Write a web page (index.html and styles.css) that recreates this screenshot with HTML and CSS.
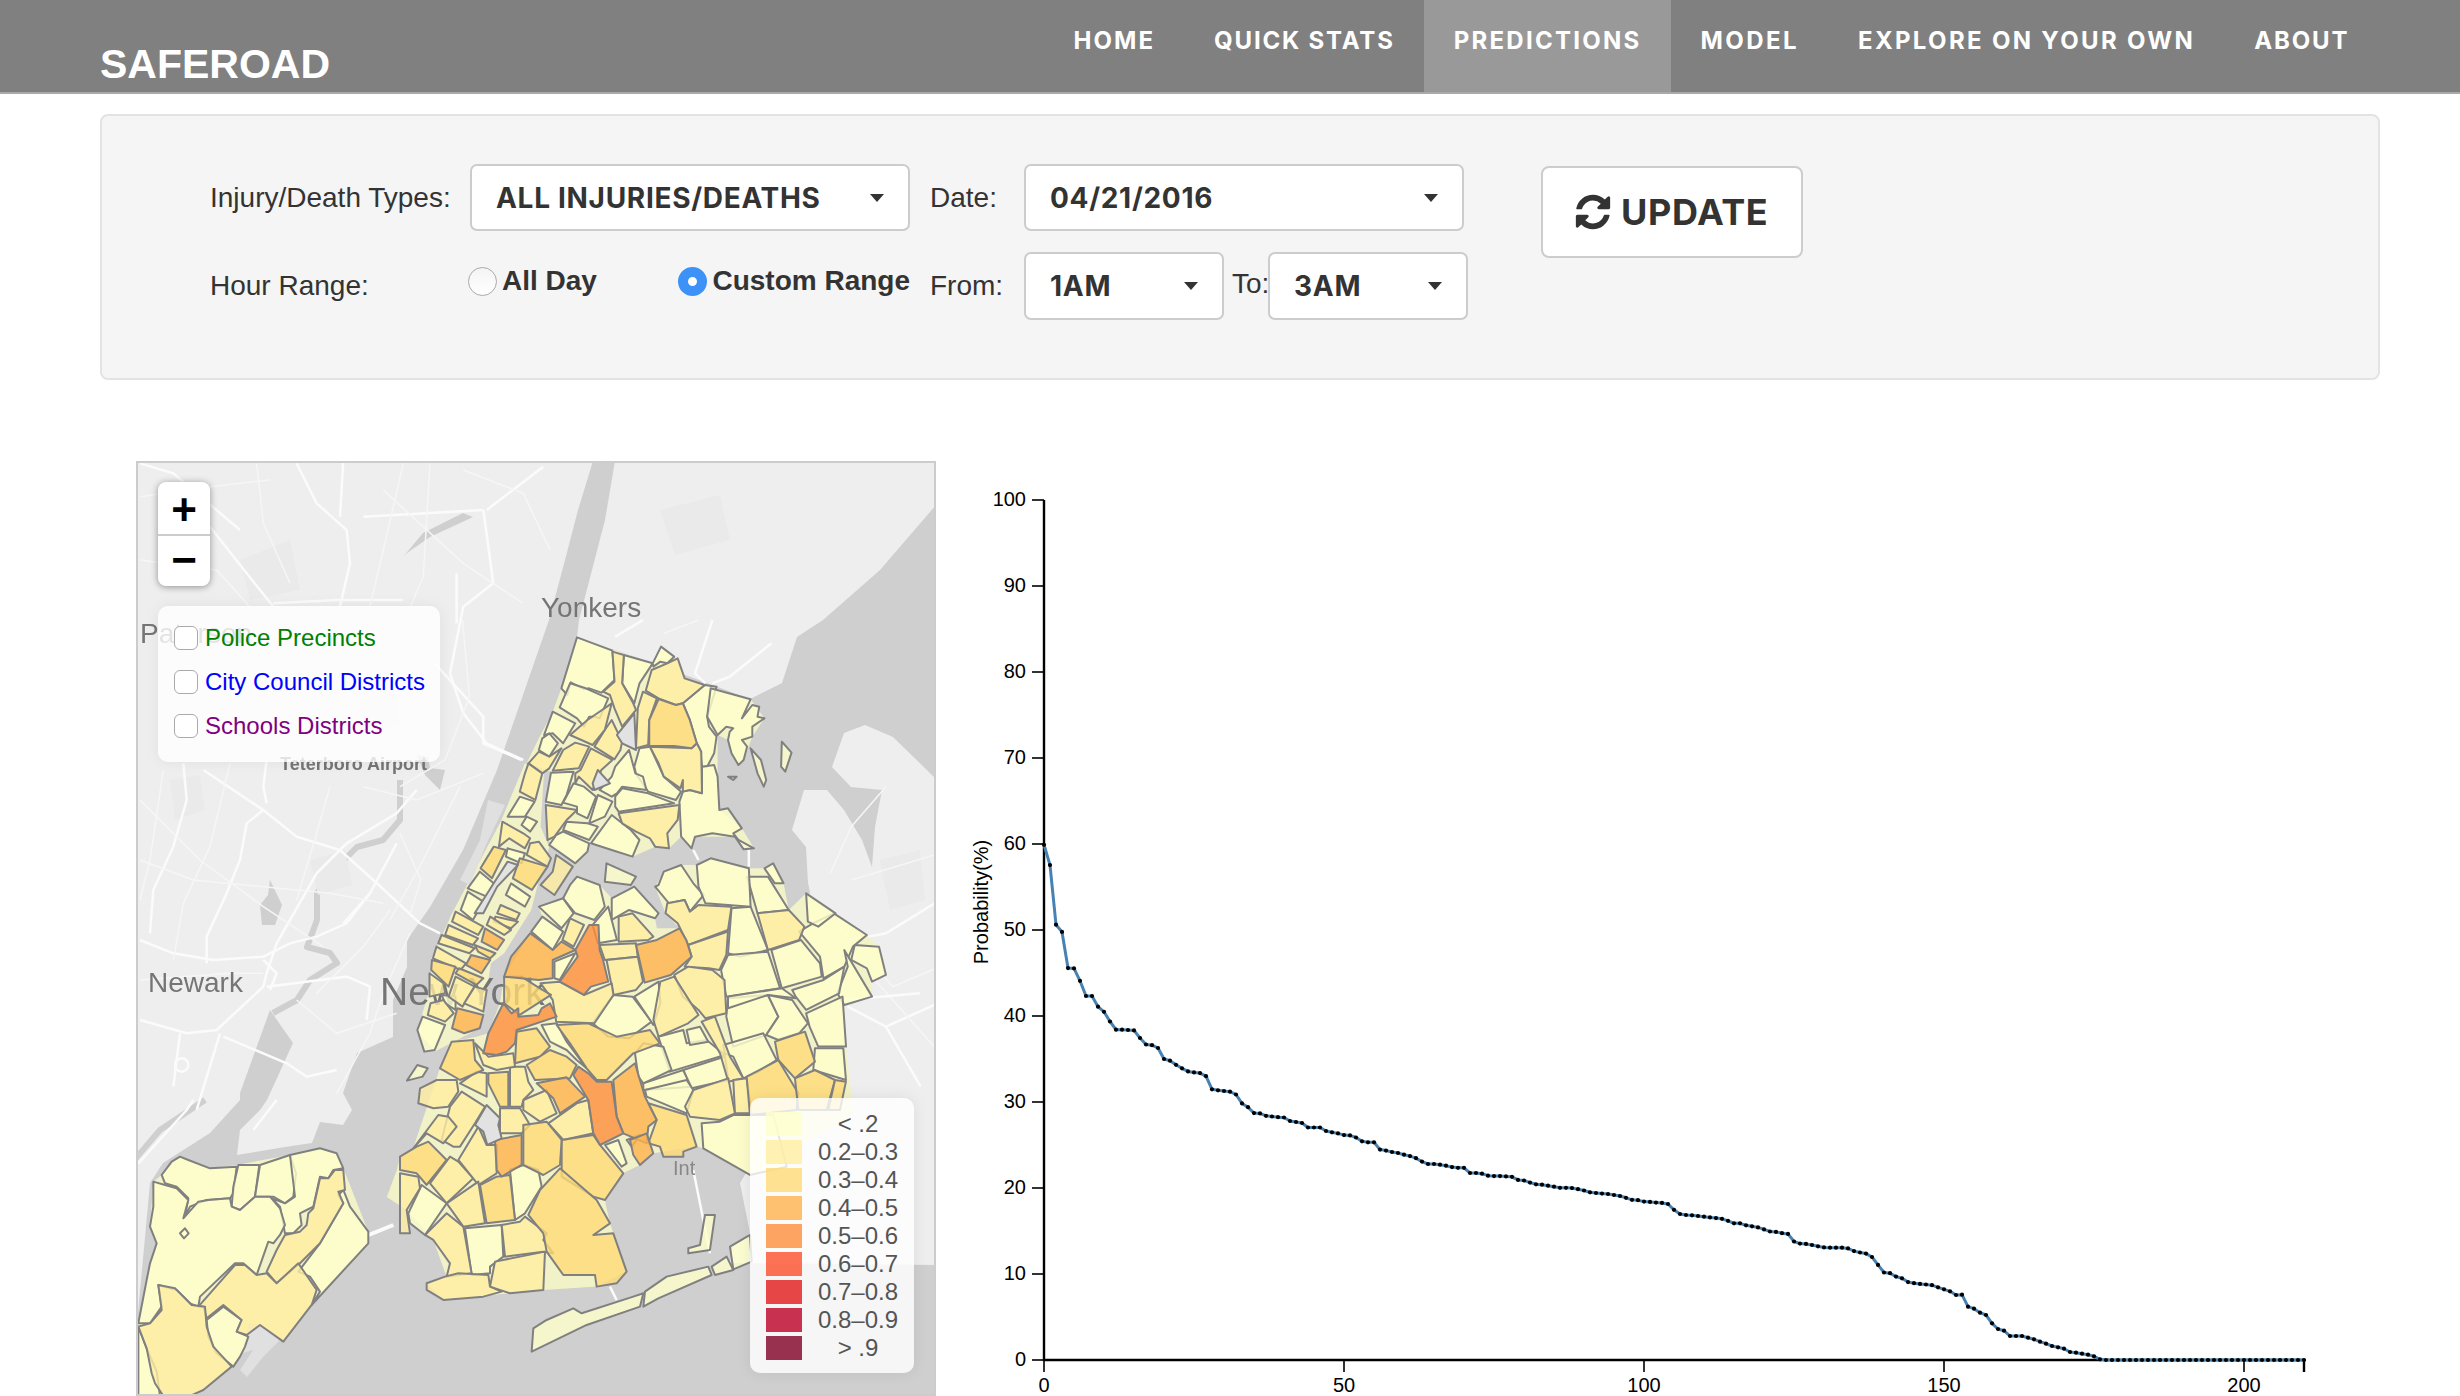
FILE: index.html
```html
<!DOCTYPE html>
<html lang="en">
<head>
<meta charset="utf-8">
<title>SafeRoad</title>
<link rel="stylesheet" href="styles.css">
</head>
<body>
<header class="topbar">
  <div class="brand">SAFEROAD</div>
  <nav class="nav">
    <a class="nav-item">HOME</a>
    <a class="nav-item quick">QUICK STATS</a>
    <a class="nav-item active pred">PREDICTIONS</a>
    <a class="nav-item model">MODEL</a>
    <a class="nav-item explore">EXPLORE ON YOUR OWN</a>
    <a class="nav-item about">ABOUT</a>
  </nav>
</header>

<section class="filters">
  <div class="filter-rows">
    <div class="filter-row">
      <span class="lbl lbl-first">Injury/Death Types:</span>
      <div class="select sel-wide"><span>ALL INJURIES/DEATHS</span><i class="caret"></i></div>
      <span class="lbl lbl-mid">Date:</span>
      <div class="select sel-wide"><span>04/21/2016</span><i class="caret"></i></div>
    </div>
    <div class="filter-row">
      <span class="lbl lbl-first">Hour Range:</span>
      <div class="radios">
        <label class="radio-item item-a"><i class="radio"></i><span>All Day</span></label>
        <label class="radio-item"><i class="radio on"></i><span>Custom Range</span></label>
      </div>
      <span class="lbl lbl-mid">From:</span>
      <div class="select sel-hour"><span>1AM</span><i class="caret"></i></div>
      <span class="lbl lbl-to">To:</span>
      <div class="select sel-hour"><span>3AM</span><i class="caret"></i></div>
    </div>
  </div>
  <button class="update" type="button">
    <svg class="refresh" viewBox="0 0 1792 1792"><path d="M1639 1056q0 5-1 7-64 268-268 434.5t-478 166.5q-146 0-282.5-55t-243.5-157l-129 129q-19 19-45 19t-45-19-19-45v-448q0-26 19-45t45-19h448q26 0 45 19t19 45-19 45l-137 137q71 66 161 102t187 36q134 0 250-65t186-179q11-17 53-117 8-23 30-23h192q13 0 22.5 9.5t9.5 22.5zm25-800v448q0 26-19 45t-45 19h-448q-26 0-45-19t-19-45 19-45l138-138q-148-137-349-137-134 0-250 65t-186 179q-11 17-53 117-8 23-30 23h-199q-13 0-22.5-9.5t-9.5-22.5v-7q65-268 270-434.5t480-166.5q146 0 284 55.5t245 156.5l130-129q19-19 45-19t45 19 19 45z"/></svg>
    <span>UPDATE</span>
  </button>
</section>

<main class="content">
  <div class="map">
    <svg class="map-svg" viewBox="138 463 796 931" width="796" height="931">
      <g class="basemap">
        <rect class="land" x="138" y="463" width="796" height="931"/>
        <polygon class="water" points="593,461 578,510 565,560 549,620 497,770 463,850 430,907 407,940 407,967 393,1000 393,1037 357,1053 343,1093 352,1110 343,1125 320,1122 312,1143 285,1147 237,1155 240,1130 260,1110 267,1100 293,1043 270,1010 240,1093 240,1100 210,1133 163,1163 150,1183 138,1313 138,1396 936,1396 936,505 880,570 823,620 797,637 782,683 750,699 653,663 577,637 579,620 605,520 615,461"/>
        <polygon class="land" points="936,778 934,777 893,737 865,725 844,733 832,767 851,787 882,790 875,827 872,867 862,840 844,810 827,790 804,790 792,830 806,847 808,883 810,892 800,950 790,1010 790,1100 740,1183 750,1233 733,1247 730,1263 936,1265"/>
        <g class="river">
          <polyline points="400,780 400,820 383,840 357,847 337,867 317,893 317,920 307,947 330,953 337,963 310,980 297,1000 273,1013"/>
          <polyline points="205,1100 160,1130 130,1165"/>
        </g>
        <polygon class="water" points="403,557 423,533 463,513 473,517 430,537 407,553"/>
        <polygon class="water" points="417,755 428,757 430,768 445,770 440,790 425,775"/>
        <polygon class="water" points="270,880 268,895 260,905 262,925 275,925 282,905"/>
        <polygon class="blob" points="170,780 200,775 205,810 175,820"/>
        <polygon class="blob" points="310,860 345,850 352,885 318,895"/>
        <polygon class="blob" points="360,700 395,690 400,725 365,735"/>
        <polygon class="blob" points="660,510 720,495 730,540 675,555"/>
        <polygon class="blob" points="240,560 290,540 300,590 250,600"/>
        <polygon class="blob" points="880,860 920,850 925,900 890,910"/>
        <g transform="translate(400 620) scale(.3471 .3333)">
          <polygon class="backing" points="510,52 728,130 752,80 800,115 820,175 878,195 1010,238 1050,295 1015,350 990,420 975,435 945,360 915,345 915,470 920,570 985,625 1020,685 965,650 850,650 840,685 810,650 775,685 735,680 670,710 550,670 505,730 425,660 420,555 435,455 365,430 400,355 440,275 465,205"/>
          <polygon class="backing" points="360,430 415,455 405,620 430,680 398,790 378,870 300,1000 262,1030 240,1180 230,1225 100,1295 50,1230 88,1100 90,1020 150,880 290,605"/>
          <polygon class="backing" points="470,835 510,770 575,795 610,835 675,800 745,880 735,895 740,925 805,925 765,880 735,800 760,755 810,735 855,735 895,715 1005,745 1050,745 1075,730 1105,790 1120,870 1170,820 1345,945 1380,980 1400,1065 1360,1085 1360,1130 1280,1155 1285,1280 1295,1380 1310,1480 1008,1665 874,1585 855,1580 730,1600 691,1635 643,1660 590,1740 605,1810 653,1955 567,2000 413,2010 125,2040 77,1990 134,1970 96,1860 19,1770 -38,1731 -9,1650 0,1610 38,1585 115,1345 144,1265 220,1250 254,1240 288,1150 300,1070 375,940 410,890 400,860"/>
        </g>
        <polygon class="backing" transform="translate(130 1100) scale(.3333)" points="95,225 150,170 240,205 320,195 480,165 570,145 620,160 640,205 715,395 715,430 545,615 460,725 390,675 350,705 345,740 310,800 220,870 180,888 25,888 25,670 50,540 80,430 60,380 70,245"/>
        <polygon class="park" points="488,800 505,805 486,845 470,885 460,880 480,840"/>
        <polygon class="park" points="633,713 636,750 622,743 617,735"/>
        <polygon class="park" points="597,770 610,783 594,790 592,783"/>
        <polygon class="park" points="487,1105 500,1118 498,1125 502,1138 488,1145 483,1132 475,1125"/>
        <polygon class="park" points="248,1324 260,1324 280,1340 263,1357 247,1377 240,1370 253,1350 243,1353"/>
        <g class="roads" transform="translate(130 760) scale(.3333)">
          <polyline points="30,540 130,580 250,600 400,590 480,550 560,530 650,490 720,400"/>
          <polyline points="160,10 170,120 130,260 70,390 60,520"/>
          <polyline points="220,30 400,150 500,230 630,270 730,360 870,490 930,520"/>
          <polyline points="400,150 350,190 330,300 290,400 230,530 230,610"/>
          <polyline points="860,90 800,160 650,250 560,340 440,550 410,640 400,680 260,810 170,820 30,780"/>
          <polyline points="410,0 400,80 410,130"/>
          <polyline points="410,680 650,650 720,680 710,780"/>
          <polyline points="280,830 470,910 530,950 620,930"/>
          <polyline points="270,820 200,1050"/>
          <polyline points="150,820 130,980"/>
          <polyline points="800,250 720,400 640,490"/>
          <polyline points="400,600 440,640 420,690"/>
          <circle cx="155" cy="915" r="20"/>
        </g>
        <g class="roads minor" transform="translate(130 760) scale(.3333)">
          <polyline points="30,120 210,300 400,440 580,560"/>
          <polyline points="100,30 60,300 30,420"/>
          <polyline points="300,10 240,260 160,430 130,600"/>
          <polyline points="600,80 560,220 500,420"/>
          <polyline points="30,300 190,360 400,380 600,400 760,430"/>
          <polyline points="30,660 300,640 400,640"/>
          <polyline points="500,720 620,820 800,760"/>
          <polyline points="560,700 700,560 780,450"/>
          <polyline points="620,1000 720,820 760,700 840,520"/>
          <polyline points="990,80 880,300 780,480"/>
          <polyline points="700,80 860,120 1060,40"/>
        </g>
        <g class="roads" transform="translate(130 450) scale(.3333)">
          <polyline points="500,40 560,160 650,240 660,340 630,470"/>
          <polyline points="640,30 630,200"/>
          <polyline points="240,230 350,370 430,470"/>
          <polyline points="30,40 130,70 330,240"/>
          <polyline points="700,200 1060,180"/>
          <polyline points="1060,180 1090,400 1000,470 960,670 1000,790 1070,880 1180,930"/>
          <polyline points="1240,50 1070,180"/>
          <polyline points="980,370 980,520"/>
          <polyline points="430,460 620,450 820,450"/>
        </g>
        <g class="roads minor" transform="translate(130 450) scale(.3333)">
          <polyline points="380,40 400,220 480,400"/>
          <polyline points="820,40 760,300 720,470"/>
          <polyline points="900,40 880,380 820,520"/>
          <polyline points="30,330 260,360 440,560"/>
          <polyline points="1000,60 1180,130 1260,300"/>
          <polyline points="760,120 1000,340 1180,460"/>
          <polyline points="30,140 240,110 420,90"/>
        </g>
        <g class="roads" transform="translate(400 620) scale(.3471 .3333)">
          <polyline points="100,130 240,290 240,370 350,420"/>
          <polyline points="620,50 700,0"/>
          <polyline points="900,0 850,160 880,190"/>
          <polyline points="1070,70 950,170 900,190"/>
          <polyline points="1556,840 1400,940 1350,950"/>
          <polyline points="1550,1150 1400,1220 1290,1160"/>
          <polyline points="1400,1220 1500,1400"/>
          <polyline points="845,690 860,720"/>
          <polyline points="1005,690 1005,740"/>
        </g>
        <g class="roads minor" transform="translate(400 620) scale(.3471 .3333)">
          <polyline points="0,500 130,420 200,230 180,0"/>
          <polyline points="760,40 860,0"/>
          <polyline points="1300,780 1556,700"/>
          <polyline points="1250,900 1420,1100 1556,1040"/>
          <polyline points="1400,500 1300,620 1240,760"/>
          <polyline points="1300,1000 1556,1300"/>
          <polyline points="0,640 60,780 30,880"/>
        </g>
        <g class="roads" transform="translate(130 1100) scale(.3333)">
          <polyline class="bridge" points="716,405 790,375"/>
          <polyline points="25,190 170,30 190,0"/>
          <polyline points="370,90 440,0"/>
        </g>
        <g class="roads" transform="translate(400 1000) scale(.3333)">
          <polyline points="880,510 930,760"/>
          <polyline points="630,860 650,900"/>
          <polyline points="1330,0 1560,-20"/>
        </g>
        <text class="place" x="541" y="617">Yonkers</text>
        <text class="place" x="140" y="643">Paterson</text>
        <text class="place" x="148" y="992">Newark</text>
        <text class="place big" x="380" y="1005">New York</text>
        <text class="place small" x="280" y="770">Teterboro Airport</text>
        <text class="place int" x="673" y="1175">Int</text>
      </g>

      <g class="districts" transform="translate(400 620) scale(.3471 .3333)">
        <g class="c0">
          <polygon points="510,52 612,92 618,180 580,218 545,205 530,208 492,187 482,225 465,205"/>
          <polygon points="645,105 728,130 690,190 675,250 640,190"/>
          <polygon points="752,80 790,110 770,130 750,125 730,140 728,130"/>
          <polygon points="815,250 878,195 912,200 885,290 890,320 912,350 905,400 885,440 870,440 865,390 855,370 835,300"/>
          <polygon points="895,205 1010,238 985,295 1015,255 1035,260 1030,290 1050,295 1015,320 1015,350 985,360 1000,380 990,420 975,435 955,400 945,360 950,335 960,325 940,320 915,345 885,290"/>
          <polygon points="1100,365 1128,398 1110,455 1098,440"/>
          <polygon points="1010,385 1040,420 1055,480 1048,500 1030,460"/>
          <polygon points="945,470 970,470 960,480"/>
          <polygon points="690,385 720,380 760,470 810,515 795,540 715,515 680,462 675,440"/>
          <polygon points="870,440 905,435 915,470 920,570 945,565 985,625 960,640 975,660 1020,685 990,688 965,650 900,640 850,650 840,685 810,650 805,545 815,515 835,510 870,520"/>
          <polygon points="640,505 715,520 790,550 630,575 620,560 620,530"/>
          <polygon points="660,390 678,460 700,470 710,510 640,500 625,520 610,530 575,510 610,470 620,440"/>
          <polygon points="490,190 535,205 600,235 575,295 560,290 545,290 530,320 510,295 460,262"/>
          <polygon points="440,275 505,310 470,370 440,340 415,345"/>
          <polygon points="430,340 455,370 430,410 400,390 410,355"/>
          <polygon points="435,458 500,455 480,525 465,555 420,545"/>
          <polygon points="500,490 530,500 565,530 540,595 510,580 510,560 470,548"/>
          <polygon points="570,525 612,545 590,590 545,610"/>
          <polygon points="480,605 540,610 570,620 545,660 470,630"/>
          <polygon points="610,585 665,630 690,660 670,710 610,690 550,670"/>
          <polygon points="470,635 545,670 540,695 505,730 430,675 450,645"/>
          <polygon points="345,530 388,545 360,590 310,590"/>
          <polygon points="365,590 395,605 375,635 350,615"/>
          <polygon points="310,685 360,700 350,730 305,710"/>
          <polygon points="230,755 270,790 250,830 195,805"/>
          <polygon points="195,815 240,845 210,900 175,870"/>
          <polygon points="320,790 375,830 360,860 305,825"/>
          <polygon points="120,1125 160,1130 160,1170 130,1150"/>
          <polygon points="65,1190 130,1215 100,1290 70,1295 50,1230"/>
          <polygon points="50,1335 80,1345 65,1370 20,1382"/>
          <polygon points="595,730 680,770 665,795 590,785"/>
          <polygon points="510,770 575,795 590,860 560,900 505,880 470,835 490,795"/>
          <polygon points="400,860 470,835 500,880 465,925"/>
          <polygon points="378,935 410,890 470,935 440,990"/>
          <polygon points="600,860 625,960 570,970 555,915"/>
          <polygon points="610,835 675,800 745,880 735,895 660,870 610,900"/>
          <polygon points="745,795 760,755 810,735 845,790 875,825 835,875 820,840 775,850 735,800"/>
          <polygon points="445,1025 505,1000 460,1080 445,1075"/>
          <polygon points="555,1210 615,1125 670,1130 725,1205 660,1255 600,1250"/>
          <polygon points="675,1130 745,1085 750,1150 730,1215"/>
          <polygon points="955,865 1010,860 1060,990 980,1010 945,1000"/>
          <polygon points="1000,770 1060,770 1120,870 1030,880"/>
          <polygon points="855,735 895,715 1005,745 1010,860 880,850 860,800"/>
          <polygon points="1050,745 1075,730 1105,790 1080,790"/>
          <polygon points="945,1005 1060,995 1095,1105 940,1130 925,1050"/>
          <polygon points="1070,990 1155,960 1210,1030 1215,1070 1100,1105"/>
          <polygon points="1150,935 1190,910 1250,880 1345,945 1305,980 1280,1040 1220,1075 1210,1010"/>
          <polygon points="1170,820 1255,880 1205,920 1175,905"/>
          <polygon points="1310,975 1380,980 1400,1065 1360,1085 1345,1045 1300,1020"/>
          <polygon points="1280,990 1360,1130 1280,1155 1260,1120 1290,1040"/>
          <polygon points="1130,1110 1220,1080 1280,1040 1265,1120 1170,1170 1140,1130"/>
          <polygon points="945,1135 1060,1125 1090,1190 1055,1245 960,1280 940,1190"/>
          <polygon points="945,1130 1100,1105 1140,1135 1060,1125 945,1165"/>
          <polygon points="1060,1125 1130,1140 1175,1210 1150,1240 1090,1260 1055,1245 1090,1190"/>
          <polygon points="1170,1180 1275,1130 1285,1280 1205,1280 1180,1220"/>
        </g>
        <g class="c1">
          <polygon points="612,95 645,105 640,190 672,250 680,270 640,320 618,265 605,225 585,215 618,185"/>
          <polygon points="800,115 820,175 878,195 815,250 795,255 745,235 708,212 725,150 770,130"/>
          <polygon points="700,215 740,235 718,300 715,375 680,385 685,265"/>
          <polygon points="720,380 840,385 855,370 868,395 870,520 835,510 815,515 815,480 808,505 760,470 745,430"/>
          <polygon points="805,555 630,580 640,610 680,635 720,655 735,680 775,685 770,640 800,600"/>
          <polygon points="550,385 612,420 580,450 555,510 535,490 515,470 505,490 505,460 520,450"/>
          <polygon points="610,300 640,365 635,390 618,418 560,380 590,330"/>
          <polygon points="610,250 590,330 555,375 490,345 540,300"/>
          <polygon points="505,368 545,380 515,445 440,452 470,390"/>
          <polygon points="400,395 430,410 465,385 430,445 410,460 370,430"/>
          <polygon points="370,430 410,460 390,540 345,515 360,460"/>
          <polygon points="420,555 510,570 480,600 445,650 425,660"/>
          <polygon points="295,605 355,640 375,655 360,685 315,655 285,680"/>
          <polygon points="375,670 400,665 435,715 425,740 365,705"/>
          <polygon points="450,705 498,740 445,825 405,795 440,755"/>
          <polygon points="290,855 345,880 335,900 280,880"/>
          <polygon points="275,890 340,905 320,925 270,905"/>
          <polygon points="260,890 320,930 300,945 250,915"/>
          <polygon points="160,875 240,920 225,945 150,905"/>
          <polygon points="140,915 225,955 210,975 130,945"/>
          <polygon points="120,945 215,985 200,1000 110,970"/>
          <polygon points="105,980 190,1030 175,1050 95,1015"/>
          <polygon points="160,1070 215,1100 180,1160 140,1130"/>
          <polygon points="215,1100 250,1110 240,1175 185,1150"/>
          <polygon points="88,1150 125,1140 155,1180 130,1205 80,1185"/>
          <polygon points="85,1060 125,1090 130,1120 85,1130"/>
          <polygon points="490,895 530,915 500,980 468,960"/>
          <polygon points="630,890 670,880 730,950 715,960 630,965"/>
          <polygon points="770,850 820,840 835,875 860,855 955,860 945,930 830,975 800,910 765,880"/>
          <polygon points="830,975 945,935 940,1005 920,1050 890,1045 820,1040 840,1010"/>
          <polygon points="575,975 680,970 685,1010 590,1020"/>
          <polygon points="595,1020 685,1010 700,1085 680,1110 615,1125"/>
          <polygon points="405,1090 460,1085 530,1125 610,1090 615,1125 560,1210 450,1205 440,1140"/>
          <polygon points="790,1065 830,1040 900,1050 935,1080 940,1180 880,1195 860,1170 815,1130"/>
          <polygon points="750,1085 790,1070 860,1185 830,1210 745,1250 730,1200"/>
          <polygon points="1030,880 1120,870 1165,920 1150,960 1060,990"/>
        </g>
        <g class="c2">
          <polygon points="745,237 795,255 815,250 835,300 855,370 840,385 790,378 718,378 718,300"/>
          <polygon points="345,715 425,740 380,810 325,775"/>
          <polygon points="270,680 305,690 265,775 232,745"/>
          <polygon points="215,975 275,1000 260,1015 225,995"/>
          <polygon points="92,1020 160,1040 140,1100 90,1050"/>
          <polygon points="170,1045 240,1075 220,1095 160,1060"/>
          <polygon points="300,1070 350,1070 395,1100 435,1125 345,1185 300,1150"/>
        </g>
        <g class="c3">
          <polygon points="245,925 300,960 280,990 235,965"/>
          <polygon points="205,1005 260,1020 235,1060 190,1035"/>
          <polygon points="165,1165 240,1185 230,1225 185,1240 150,1225"/>
          <polygon points="680,975 740,960 805,925 825,960 840,1010 780,1065 705,1088"/>
          <polygon points="375,940 440,990 465,965 505,990 440,1020 440,1075 400,1080 300,1070 320,1010"/>
        </g>
        <g class="c4">
          <polygon points="545,915 572,915 575,990 585,1020 600,1085 550,1100 530,1125 460,1085 512,1010 505,990"/>
        </g>
      </g>

      <g class="districts" transform="translate(400 1000) scale(.3333)">
        <g class="c0">
          <polygon points="775,110 850,90 860,130 920,120 975,165 810,215"/>
          <polygon points="860,90 900,80 925,125 870,135"/>
          <polygon points="705,160 730,130 790,140 815,210 730,250 715,230"/>
          <polygon points="730,250 850,210 875,260 730,270"/>
          <polygon points="850,210 975,170 985,240 875,265"/>
          <polygon points="735,270 860,240 880,270 860,340 740,290"/>
          <polygon points="970,135 1090,100 1130,180 1075,215 1030,235 1000,170 975,160"/>
          <polygon points="1245,145 1330,145 1338,240 1240,210"/>
          <polygon points="905,370 960,365 1000,345 1050,345 1120,345 1160,500 1050,525 910,445"/>
          <polygon points="615,435 655,420 680,490 665,500"/>
          <polygon points="680,420 720,405 695,440"/>
          <polygon points="330,510 370,495 415,510 425,560 375,640 345,660"/>
          <polygon points="425,75 470,70 500,125 560,205 530,180 500,150 450,125"/>
          <polygon points="65,555 140,610 75,705 30,670 25,640"/>
          <polygon points="195,685 305,675 310,770 270,800 270,820 215,825"/>
          <polygon points="400,985 440,960 520,925 545,940 700,890 730,880 720,920 560,975 395,1055"/>
          <polygon points="735,875 800,830 925,800 935,825 775,895 730,920"/>
          <polygon points="935,800 980,770 1000,810 945,825"/>
          <polygon points="990,740 1050,705 1055,785 1000,808"/>
          <polygon points="915,645 945,645 930,750 865,760 865,745 900,735"/>
        </g>
        <g class="c1">
          <polygon points="905,65 945,50 990,170 1030,235 985,245 960,160"/>
          <polygon points="880,270 985,235 1005,340 960,360 870,350 855,320"/>
          <polygon points="1000,240 1040,235 1055,340 1005,340"/>
          <polygon points="445,370 530,310 565,300 580,400 490,420"/>
          <polygon points="300,325 360,325 390,375 365,400 300,400"/>
          <polygon points="370,300 440,270 470,340 420,365 370,330"/>
          <polygon points="330,200 375,200 385,245 400,270 370,300 365,320 330,320"/>
          <polygon points="180,250 230,215 260,220 260,290"/>
          <polygon points="60,265 110,240 170,240 175,275 145,320 100,325 55,310"/>
          <polygon points="150,320 185,275 255,320 225,370 180,440 160,440 125,420"/>
          <polygon points="115,345 145,350 170,380 130,430 80,400 40,445"/>
          <polygon points="90,550 150,470 175,485 220,535 140,610"/>
          <polygon points="175,480 235,380 260,435 290,435 290,520 235,555"/>
          <polygon points="0,520 55,530 60,565 20,630 30,700 0,700"/>
          <polygon points="140,640 190,680 215,820 140,830 150,790 100,720 75,705"/>
          <polygon points="140,610 235,545 255,670 190,680"/>
          <polygon points="305,675 360,665 375,650 440,700 430,720 460,760 430,755 315,770"/>
          <polygon points="285,785 435,755 430,870 330,880 270,860"/>
          <polygon points="80,850 135,830 175,820 265,825 270,860 305,875 250,890 130,900 80,870"/>
          <polygon points="225,130 265,170 340,160 345,200 290,210 250,195"/>
        </g>
        <g class="c2">
          <polygon points="1125,125 1215,95 1245,185 1185,235 1135,180"/>
          <polygon points="1040,230 1135,180 1195,280 1190,330 1050,345"/>
          <polygon points="1185,235 1245,210 1305,240 1280,330 1195,330"/>
          <polygon points="1305,240 1338,245 1320,330 1285,330"/>
          <polygon points="745,310 860,345 890,440 850,455 850,470 790,470 780,440 745,430 770,360"/>
          <polygon points="485,420 580,405 600,435 670,520 615,600 580,590 485,530"/>
          <polygon points="370,375 440,365 485,420 480,495 430,525 370,495"/>
          <polygon points="240,555 290,530 330,525 345,660 260,670"/>
          <polygon points="265,220 325,215 325,320 300,320 265,250"/>
          <polygon points="120,205 155,125 220,120 225,180 250,210 180,240"/>
          <polygon points="350,95 410,85 450,140 420,170 345,190"/>
          <polygon points="450,150 500,170 530,195 510,235 405,240 380,195"/>
          <polygon points="470,75 565,70 650,110 750,90 780,130 700,160 620,240 590,240 560,205 510,130"/>
          <polygon points="0,470 50,440 85,425 140,480 80,555 50,520 0,510"/>
          <polygon points="385,645 420,570 480,505 590,600 630,670 580,705 640,700 680,815 650,850 590,860 585,825 490,825 440,755 430,700"/>
        </g>
        <g class="c3">
          <polygon points="640,240 705,190 735,290 770,360 745,380 740,430 670,400 650,350"/>
          <polygon points="690,420 740,400 760,460 720,495 700,465"/>
          <polygon points="410,250 500,232 555,290 480,340 460,295"/>
          <polygon points="285,420 365,405 365,495 305,530 290,510"/>
        </g>
        <g class="c4">
          <polygon points="520,225 535,200 565,220 590,245 635,245 650,350 670,400 600,435 580,400 565,300"/>
          <polygon points="310,10 335,40 355,25 355,50 415,45 425,25 450,10 470,50 350,90 345,130 320,155 290,165 250,160 265,100"/>
        </g>
        <polygon class="hole" points="260,315 300,355 295,375 305,415 262,435 250,395 225,375"/>
      </g>

      <g class="districts" transform="translate(130 1100) scale(.3333)">
        <g class="c0">
          <polygon points="95,225 125,185 150,170 175,180 240,205 320,200 310,280 300,295 230,300 180,320 165,350 175,295 140,260 105,250"/>
          <polygon points="325,195 388,195 375,290 330,330 305,320 310,260"/>
          <polygon points="390,195 480,165 498,220 490,290 465,310 430,290 375,290"/>
          <polygon points="480,165 570,145 620,160 640,205 610,210 595,235 570,230 550,320 530,330 510,340 515,375 490,400 465,400 450,320 425,295 465,310 495,290"/>
          <polygon points="640,270 660,320 715,395 715,430 545,615 570,575 540,530 505,515 570,430 640,310 625,285"/>
          <polygon points="70,245 105,255 140,265 175,300 160,355 205,305 235,300 300,295 305,320 330,330 375,290 420,290 450,325 465,375 450,405 430,430 415,425 380,525 340,490 315,490 210,590 205,620 180,610 140,570 85,555 95,620 60,670 25,670 50,540 60,490 80,430 60,380 70,320"/>
          <polygon points="280,620 335,660 320,695 355,710 345,740 330,770 310,800 260,760 235,710 230,660"/>
          <polygon points="25,680 50,745 80,815 90,888 25,888"/>
          <polygon points="150,400 165,385 176,400 162,415"/>
        </g>
        <g class="c1">
          <polygon points="570,235 595,235 615,210 640,210 645,270 625,275 640,310 570,430 510,490 440,550 410,515 440,450 465,405 510,395 530,375 535,340 550,325"/>
          <polygon points="315,495 345,495 380,525 410,520 440,550 505,490 560,570 545,615 460,725 390,675 350,705 320,695 335,660 280,615 230,655 220,620 205,620"/>
          <polygon points="85,555 135,565 185,615 225,620 230,680 250,740 305,800 220,870 180,888 100,888 75,850 65,820 50,745 25,680 60,670 95,630"/>
        </g>
      </g>

      <g class="districts" transform="translate(400 620) scale(.3471 .3333)">
        <polygon class="hole" points="675,280 680,390 640,370 625,345"/>
        <polygon class="hole" points="570,450 605,490 560,510 555,490"/>
        <polygon class="hole" points="310,725 340,735 280,800 240,880 215,880 270,790"/>
      </g>
    </svg>

    <div class="zoom">
      <div class="zoom-btn">+</div>
      <div class="zoom-btn">−</div>
    </div>

    <div class="layers">
      <label class="layer green"><i class="check"></i>Police Precincts</label>
      <label class="layer blue"><i class="check"></i>City Council Districts</label>
      <label class="layer purple"><i class="check"></i>Schools Districts</label>
    </div>

    <div class="legend">
      <div class="legend-row"><i class="swatch s0"></i><span>&lt; .2</span></div>
      <div class="legend-row"><i class="swatch s1"></i><span>0.2–0.3</span></div>
      <div class="legend-row"><i class="swatch s2"></i><span>0.3–0.4</span></div>
      <div class="legend-row"><i class="swatch s3"></i><span>0.4–0.5</span></div>
      <div class="legend-row"><i class="swatch s4"></i><span>0.5–0.6</span></div>
      <div class="legend-row"><i class="swatch s5"></i><span>0.6–0.7</span></div>
      <div class="legend-row"><i class="swatch s6"></i><span>0.7–0.8</span></div>
      <div class="legend-row"><i class="swatch s7"></i><span>0.8–0.9</span></div>
      <div class="legend-row"><i class="swatch s8"></i><span>&gt; .9</span></div>
    </div>
  </div>

  <svg class="chart" viewBox="960 461 1400 935" width="1400" height="935">
    <defs>
      <marker id="dot" markerUnits="userSpaceOnUse" markerWidth="6" markerHeight="6" refX="3" refY="3">
        <circle cx="3" cy="3" r="2.1" fill="#000"/>
      </marker>
    </defs>
    <g class="ticks">
      <line x1="1032" x2="1044" y1="500" y2="500"/><line x1="1032" x2="1044" y1="586" y2="586"/>
      <line x1="1032" x2="1044" y1="672" y2="672"/><line x1="1032" x2="1044" y1="758" y2="758"/>
      <line x1="1032" x2="1044" y1="844" y2="844"/><line x1="1032" x2="1044" y1="930" y2="930"/>
      <line x1="1032" x2="1044" y1="1016" y2="1016"/><line x1="1032" x2="1044" y1="1102" y2="1102"/>
      <line x1="1032" x2="1044" y1="1188" y2="1188"/><line x1="1032" x2="1044" y1="1274" y2="1274"/>
      <line x1="1032" x2="1044" y1="1360" y2="1360"/>
      <line x1="1044" x2="1044" y1="1360" y2="1372"/><line x1="1344" x2="1344" y1="1360" y2="1372"/>
      <line x1="1644" x2="1644" y1="1360" y2="1372"/><line x1="1944" x2="1944" y1="1360" y2="1372"/>
      <line x1="2244" x2="2244" y1="1360" y2="1372"/>
    </g>
    <path class="axis" d="M1044 500V1360H2304V1372"/>
    <g class="ylabels">
      <text x="1026" y="506">100</text><text x="1026" y="592">90</text><text x="1026" y="678">80</text>
      <text x="1026" y="764">70</text><text x="1026" y="850">60</text><text x="1026" y="936">50</text>
      <text x="1026" y="1022">40</text><text x="1026" y="1108">30</text><text x="1026" y="1194">20</text>
      <text x="1026" y="1280">10</text><text x="1026" y="1366">0</text>
    </g>
    <g class="xlabels">
      <text x="1044" y="1392">0</text><text x="1344" y="1392">50</text><text x="1644" y="1392">100</text>
      <text x="1944" y="1392">150</text><text x="2244" y="1392">200</text>
    </g>
    <text class="ytitle" transform="translate(988 902) rotate(-90)">Probability(%)</text>
    <polyline class="curve" points="1044,844.8 1050,865.1 1056,924.7 1062,931.9 1068,968.1 1074,968.4 1080,980.8 1086,996 1092,996 1098,1006.7 1104,1011.8 1110,1021.5 1116,1029.7 1122,1029.7 1128,1030 1134,1030.4 1140,1038 1146,1044.5 1152,1045.2 1158,1048 1164,1059 1170,1060.7 1176,1064.8 1182,1068.3 1188,1071.4 1194,1072.4 1200,1073.1 1206,1076.2 1212,1089.3 1218,1090.3 1224,1091 1230,1091.7 1236,1094.5 1242,1103.4 1248,1107.2 1254,1113.1 1260,1113.4 1266,1115.8 1272,1116.5 1278,1117.2 1284,1117.5 1290,1121 1296,1122 1302,1123 1308,1127.5 1314,1127.5 1320,1127.5 1326,1131 1332,1132.3 1338,1133.4 1344,1135.1 1350,1135.4 1356,1137.5 1362,1141.3 1368,1142.3 1374,1142.3 1380,1149.6 1386,1150.6 1392,1152 1398,1153 1404,1154.7 1410,1156.1 1416,1158.2 1422,1161.6 1428,1164 1434,1164 1440,1164.7 1446,1165.7 1452,1167.1 1458,1167.8 1464,1167.8 1470,1173 1476,1173 1482,1173.7 1488,1175.7 1494,1176.1 1500,1176.1 1506,1176.4 1512,1176.8 1518,1179.9 1524,1180.5 1530,1182.6 1536,1184.3 1542,1184.7 1548,1185.7 1554,1186.7 1560,1187.8 1566,1187.8 1572,1188.1 1578,1189.2 1584,1190.5 1590,1192.3 1596,1193 1602,1193.6 1608,1194 1614,1195 1620,1196 1626,1197.8 1632,1199.8 1638,1200.2 1644,1201.6 1650,1201.9 1656,1202.6 1662,1202.9 1668,1204 1674,1209.8 1680,1214 1686,1215 1692,1215.3 1698,1216 1704,1216.7 1710,1217.4 1716,1218.1 1722,1218.8 1728,1220.8 1734,1223.3 1740,1223.3 1746,1225.3 1752,1226.3 1758,1227.4 1764,1229.4 1770,1231.5 1776,1231.9 1782,1233.2 1788,1233.9 1794,1241.5 1800,1243.6 1806,1243.9 1812,1245 1818,1246.3 1824,1247.4 1830,1247.7 1836,1247.7 1842,1247.7 1848,1248.4 1854,1251.1 1860,1252.5 1866,1253.6 1872,1257 1878,1264.9 1884,1272.5 1890,1273.2 1896,1276.6 1902,1278.3 1908,1282.1 1914,1283.2 1920,1283.9 1926,1284.5 1932,1285.2 1938,1287.3 1944,1289.3 1950,1291.3 1956,1295 1962,1294.7 1968,1306.7 1974,1308.7 1980,1312.7 1986,1315 1992,1323.3 1998,1329 2004,1330.7 2010,1336 2016,1336 2022,1336 2028,1337.7 2034,1339.3 2040,1341.7 2046,1343.7 2052,1346 2058,1347.3 2064,1348.7 2070,1352 2076,1352.7 2082,1353.7 2088,1354.7 2094,1356.3 2100,1359.3 2106,1360 2112,1360 2118,1360 2124,1360 2130,1360 2136,1360 2142,1360 2148,1360 2154,1360 2160,1360 2166,1360 2172,1360 2178,1360 2184,1360 2190,1360 2196,1360 2202,1360 2208,1360 2214,1360 2220,1360 2226,1360 2232,1360 2238,1360 2244,1360 2250,1360 2256,1360 2262,1360 2268,1360 2274,1360 2280,1360 2286,1360 2292,1360 2298,1360 2304,1360"/>
  </svg>
</main>
</body>
</html>
```

FILE: styles.css
```css
* { box-sizing: border-box; }
html, body { margin: 0; padding: 0; }
body {
  width: 2460px;
  height: 1396px;
  overflow: hidden;
  background: #fff;
  font-family: "Liberation Sans", Arial, sans-serif;
  color: #333;
}

/* top bar */
.topbar {
  height: 94px;
  background: #808080;
  border-bottom: 2px solid #a9a9a9;
  display: flex;
  justify-content: space-between;
  padding: 0 81px 0 100px;
}
.brand {
  font-size: 41px;
  font-weight: 700;
  color: #fff;
  line-height: 46px;
  padding-top: 41px;
}
.nav { display: flex; }
.nav-item {
  font-family: Inter, "Liberation Sans", sans-serif;
  font-weight: 700;
  font-size: 24px;
  letter-spacing: 2.07px;
  color: #fff;
  height: 92px;
  padding: 26px 29.5px 0;
  line-height: 30px;
  white-space: nowrap;
}
.nav-item.quick { letter-spacing: 1.8px; }
.nav-item.pred { letter-spacing: 2.25px; }
.nav-item.model { letter-spacing: 2.45px; }
.nav-item.explore { letter-spacing: 2.33px; }
.nav-item.about { letter-spacing: 1.9px; }
.nav-item.active { background: #999; }

/* filter panel */
.filters {
  margin: 20px 0 0 100px;
  width: 2280px;
  height: 266px;
  background: #f5f5f5;
  border: 2px solid #e3e3e3;
  border-radius: 8px;
  padding: 48px 0 0 108px;
  display: flex;
  align-items: flex-start;
}
.filter-rows { display: flex; flex-direction: column; gap: 21px; }
.filter-row { display: flex; align-items: center; height: 67px; }
.filter-row + .filter-row { height: 68px; }
.lbl { font-size: 28px; line-height: 34px; white-space: nowrap; }
.lbl-first { width: 260px; }
.lbl-mid { width: 114px; padding-left: 20px; }
.lbl-to { width: 44px; padding-left: 8px; margin-top: -4px; }
.select {
  height: 100%;
  background: #fff;
  border: 2px solid #ccc;
  border-radius: 7px;
  display: flex;
  align-items: center;
  justify-content: space-between;
  padding: 0 24px;
  font-family: Inter, "Liberation Sans", sans-serif;
  font-weight: 700;
  font-size: 28px;
  letter-spacing: .7px;
  color: #333;
}
.sel-wide { width: 440px; }
.sel-hour { width: 200px; }
.caret {
  width: 0;
  height: 0;
  border-left: 7px solid transparent;
  border-right: 7px solid transparent;
  border-top: 8px solid #333;
}
.radios {
  width: 442px;
  margin-left: -2px;
  display: flex;
  align-items: center;
  margin-top: -10px;
}
.radio-item {
  display: flex;
  align-items: center;
  gap: 5px;
  font-size: 28px;
  font-weight: 700;
  line-height: 32px;
  white-space: nowrap;
}
.item-a { width: 211px; }
.radio {
  width: 29px;
  height: 29px;
  border-radius: 50%;
  background: linear-gradient(#f4f4f4, #fff);
  border: 1px solid #aaa;
  display: block;
  flex: none;
}
.radio.on {
  background: #fff;
  border: 10px solid #3d92f7;
}
.update {
  margin: 2px 0 0 73px;
  width: 262px;
  height: 92px;
  background: #fff;
  border: 2px solid #ccc;
  border-radius: 8px;
  display: flex;
  align-items: center;
  gap: 8px;
  padding: 0 0 0 30px;
  font-family: Inter, "Liberation Sans", sans-serif;
  font-weight: 700;
  font-size: 36px;
  letter-spacing: .6px;
  color: #333;
}
.refresh { width: 40px; height: 40px; fill: #333; flex: none; }

/* main row */
.content {
  display: flex;
  align-items: flex-start;
  margin-top: 81px;
  padding-left: 136px;
  gap: 24px;
}
.map {
  position: relative;
  width: 800px;
  height: 935px;
  border: 2px solid #ccc;
  flex: none;
  overflow: hidden;
}
.map-svg { display: block; }
.land { fill: #eeeeee; }
.water { fill: #cfcfcf; }
.park { fill: #e0e0e0; }
.blob { fill: #eaeaea; }
.backing { fill: #f2f2c8; }
.basemap { filter: blur(.6px); }
.river polyline { fill: none; stroke: #cfcfcf; stroke-width: 6; stroke-linejoin: round; }
.roads polyline, .roads circle {
  fill: none;
  stroke: #fbfbfb;
  stroke-width: 2.5;
  vector-effect: non-scaling-stroke;
}
.roads.minor polyline { stroke: #f6f6f6; stroke-width: 1.5; }
.roads .bridge { stroke-width: 4; }
.place { font-family: "Liberation Sans", sans-serif; font-size: 28px; fill: #757575; }
.place.big { font-size: 39px; }
.place.small { font-size: 18px; font-weight: 700; }
.place.int { font-size: 20px; fill: #888; }
.districts polygon {
  stroke: #808080;
  stroke-width: 2;
  stroke-linejoin: round;
  vector-effect: non-scaling-stroke;
  fill-opacity: .8;
}
.c0 polygon { fill: #ffffcc; }
.c1 polygon { fill: #ffeda0; }
.c2 polygon { fill: #fed976; }
.c3 polygon { fill: #feb24c; }
.c4 polygon { fill: #fd8d3c; }
.districts .hole { fill: #e2e2e2; fill-opacity: 1; }

.zoom {
  position: absolute;
  left: 20px;
  top: 19px;
  width: 52px;
  border-radius: 8px;
  background: #fff;
  box-shadow: 0 1px 7px rgba(0, 0, 0, .4);
  overflow: hidden;
}
.zoom-btn {
  height: 52px;
  text-align: center;
  font-family: "Liberation Sans", sans-serif;
  font-weight: 700;
  font-size: 44px;
  line-height: 56px;
  color: #000;
}
.zoom-btn + .zoom-btn { border-top: 2px solid #ccc; line-height: 48px; }

.layers {
  position: absolute;
  left: 20px;
  top: 143px;
  width: 282px;
  height: 156px;
  padding: 20px 0 0 16px;
  background: rgba(255, 255, 255, .8);
  border-radius: 10px;
  box-shadow: 0 0 15px rgba(0, 0, 0, .06);
}
.layer {
  display: flex;
  align-items: center;
  gap: 7px;
  height: 24px;
  margin-bottom: 20px;
  font-size: 24px;
  white-space: nowrap;
}
.check {
  width: 24px;
  height: 24px;
  background: #fff;
  border: 1px solid #aaa;
  border-radius: 6px;
  flex: none;
}
.green { color: #008000; }
.blue { color: #0000ff; }
.purple { color: #800080; }

.legend {
  position: absolute;
  left: 612px;
  top: 635px;
  width: 164px;
  height: 275px;
  padding: 12px 0 0 16px;
  background: rgba(255, 255, 255, .8);
  border-radius: 10px;
  box-shadow: 0 0 15px rgba(0, 0, 0, .08);
}
.legend-row {
  display: flex;
  align-items: center;
  height: 28px;
  font-size: 24px;
  color: #555;
}
.legend-row span { width: 112px; text-align: center; }
.swatch { width: 36px; height: 24px; opacity: .8; flex: none; }
.s0 { background: #ffffcc; }
.s1 { background: #ffeda0; }
.s2 { background: #fed976; }
.s3 { background: #feb24c; }
.s4 { background: #fd8d3c; }
.s5 { background: #fc4e2a; }
.s6 { background: #e31a1c; }
.s7 { background: #bd0026; }
.s8 { background: #800026; }

/* chart */
.chart { flex: none; display: block; overflow: hidden; }
.ticks line { stroke: #333; stroke-width: 2; }
.axis { fill: none; stroke: #000; stroke-width: 2.4; }
.chart text { font-family: "Liberation Sans", sans-serif; font-size: 20px; fill: #000; }
.ylabels text { text-anchor: end; }
.xlabels text, .ytitle { text-anchor: middle; }
.curve {
  fill: none;
  stroke: steelblue;
  stroke-width: 3;
  stroke-linejoin: round;
  marker-start: url(#dot);
  marker-mid: url(#dot);
  marker-end: url(#dot);
}
```
